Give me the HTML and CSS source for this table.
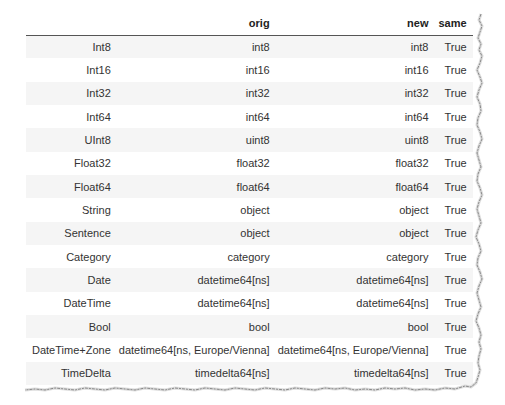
FILE: index.html
```html
<!DOCTYPE html>
<html>
<head>
<meta charset="utf-8">
<link rel="stylesheet" href="styles.css">
</head>
<body>
<div class="page">
  <table class="df">
    <thead>
      <tr><th></th><th>orig</th><th>new</th><th>same</th></tr>
    </thead>
    <tbody>
      <tr><th>Int8</th><td>int8</td><td>int8</td><td>True</td></tr>
      <tr><th>Int16</th><td>int16</td><td>int16</td><td>True</td></tr>
      <tr><th>Int32</th><td>int32</td><td>int32</td><td>True</td></tr>
      <tr><th>Int64</th><td>int64</td><td>int64</td><td>True</td></tr>
      <tr><th>UInt8</th><td>uint8</td><td>uint8</td><td>True</td></tr>
      <tr><th>Float32</th><td>float32</td><td>float32</td><td>True</td></tr>
      <tr><th>Float64</th><td>float64</td><td>float64</td><td>True</td></tr>
      <tr><th>String</th><td>object</td><td>object</td><td>True</td></tr>
      <tr><th>Sentence</th><td>object</td><td>object</td><td>True</td></tr>
      <tr><th>Category</th><td>category</td><td>category</td><td>True</td></tr>
      <tr><th>Date</th><td>datetime64[ns]</td><td>datetime64[ns]</td><td>True</td></tr>
      <tr><th>DateTime</th><td>datetime64[ns]</td><td>datetime64[ns]</td><td>True</td></tr>
      <tr><th>Bool</th><td>bool</td><td>bool</td><td>True</td></tr>
      <tr><th>DateTime+Zone</th><td>datetime64[ns, Europe/Vienna]</td><td>datetime64[ns, Europe/Vienna]</td><td>True</td></tr>
      <tr><th>TimeDelta</th><td>timedelta64[ns]</td><td>timedelta64[ns]</td><td>True</td></tr>
    </tbody>
  </table>
  <svg class="torn" width="505" height="405" viewBox="0 0 505 405">
    <polyline class="torn-shadow" points="481,14 479,20 482,26 480,32 478,38 481,44 479,50 482,56 480,63 477,70 480,77 482,83 479,90 477,97 480,104 481,111 478,118 477,125 480,132 482,139 479,146 477,153 479,160 481,167 478,174 477,181 480,188 482,195 479,202 477,209 479,216 481,223 478,230 476,237 479,244 481,251 478,258 477,265 480,272 482,279 479,286 477,293 479,300 481,307 478,314 476,321 479,328 481,335 479,342 481,349 479,356 478,363 480,370 478,377 476,383 471,387 465,386 455,389 445,388 435,390 425,389 415,390 405,388 395,389 385,388 375,390 365,389 355,390 345,388 335,389 325,388 315,390 305,389 295,388 285,390 275,389 265,388 255,390 245,389 235,388 225,390 215,389 205,388 195,390 185,389 175,388 165,390 155,389 145,388 135,390 125,389 115,388 105,390 95,389 85,388 75,390 65,389 55,388 45,390 35,389 25,390"/>
    <polyline class="torn-line" points="481,14 479,20 482,26 480,32 478,38 481,44 479,50 482,56 480,63 477,70 480,77 482,83 479,90 477,97 480,104 481,111 478,118 477,125 480,132 482,139 479,146 477,153 479,160 481,167 478,174 477,181 480,188 482,195 479,202 477,209 479,216 481,223 478,230 476,237 479,244 481,251 478,258 477,265 480,272 482,279 479,286 477,293 479,300 481,307 478,314 476,321 479,328 481,335 479,342 481,349 479,356 478,363 480,370 478,377 476,383 471,387 465,386 455,389 445,388 435,390 425,389 415,390 405,388 395,389 385,388 375,390 365,389 355,390 345,388 335,389 325,388 315,390 305,389 295,388 285,390 275,389 265,388 255,390 245,389 235,388 225,390 215,389 205,388 195,390 185,389 175,388 165,390 155,389 145,388 135,390 125,389 115,388 105,390 95,389 85,388 75,390 65,389 55,388 45,390 35,389 25,390"/>
  </svg>
</div>
</body>
</html>
```

FILE: styles.css
```css
html, body {
  margin: 0;
  padding: 0;
  background: #ffffff;
}

.page {
  position: relative;
  width: 505px;
  height: 405px;
  padding: 12px 0 0 26px;
  box-sizing: border-box;
}

.df {
  border-collapse: collapse;
  font-family: "Liberation Sans", Arial, sans-serif;
  font-size: 11px;
  color: #333333;
}

.df th,
.df td {
  padding: 0 4px;
  text-align: right;
  white-space: nowrap;
  font-weight: normal;
}

.df th:first-child {
  padding-left: 6px;
}

.df th:last-child,
.df td:last-child {
  padding-left: 6px;
  padding-right: 6px;
}

.df thead tr {
  height: 23px;
}

.df thead th {
  font-weight: bold;
  color: #222222;
  border-bottom: 1px solid #555555;
}

.df tbody tr {
  height: 23.35px;
}

.df tbody tr:nth-child(odd) {
  background: #f5f5f5;
}

.torn {
  position: absolute;
  left: 0;
  top: 0;
  pointer-events: none;
}

.torn-shadow {
  fill: none;
  stroke: #dddddd;
  stroke-width: 3;
}

.torn-line {
  fill: none;
  stroke: #8a8a8a;
  stroke-width: 1;
  stroke-dasharray: 3 1 2 1;
}
```
